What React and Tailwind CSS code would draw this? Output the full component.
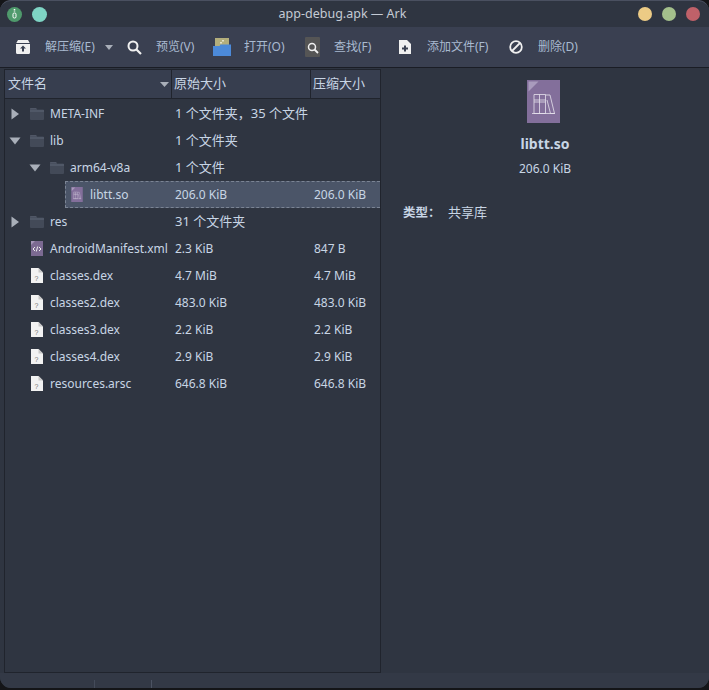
const font = { fontFamily: '"Noto Sans", "Noto Sans CJK SC", sans-serif' };

const FolderIcon = () => (
  <svg width="14" height="12" viewBox="0 0 14 12">
    <path d="M1 0h5l1 1.500h6a1 1 0 0 1 1 1V11a1 1 0 0 1-1 1H1a1 1 0 0 1-1-1V1a1 1 0 0 1 1-1z" fill="#434a58" />
    <path d="M0 2.500h14v1H0z" fill="#5f6676" />
    <path d="M1 0h5l1 1.500H0V1a1 1 0 0 1 1-1z" fill="#505766" />
  </svg>
);

const BlankFile = () => (
  <svg width="12" height="15" viewBox="0 0 12 15">
    <path d="M0 0h7.500L12 4.500V15H0z" fill="#f2f2f2" />
    <path d="M7.500 0L12 4.500H7.500z" fill="#c8c8c8" />
    <text x="5.500" y="12.500" fontSize="7" fill="#777777" fontFamily="Liberation Sans" textAnchor="middle">?</text>
  </svg>
);

const XmlFile = () => (
  <svg width="12" height="15" viewBox="0 0 12 15">
    <rect width="12" height="15" fill="#7c6a92" />
    <path d="M0 0h4L0 4z" fill="#a596b8" />
    <path d="M4 6L2 8l2 2M8 6l2 2-2 2M6.700 5.500l-1.400 5" fill="none" stroke="#eeeeee" strokeWidth="1" />
  </svg>
);

const LibraryFile = ({ small }) => (
  <svg width={small ? 12 : 33} height={small ? 15 : 43} viewBox="0 0 33 43">
    <rect width="33" height="43" fill="#836f9b" />
    <path d="M1.500 1.500h10l-10 10z" fill="#a99bbd" />
    <g fill="none" stroke="#e6e2ec" strokeWidth="0.800">
      <path d="M7 14.500h11.500v19H7zM12.500 14.500v19M7 20h11.500M7 22h11.500" />
      <path d="M18.500 15h4.500l4.500 18.500h-4L20 20" />
      <path d="M5 33.500h23" />
    </g>
  </svg>
);

const Arrow = ({ open }) => (
  <svg width="12" height="12" viewBox="0 0 12 12">
    {open ? <path d="M.5 2.500h11L6 9.500z" fill="#a9afb9" /> : <path d="M2.500 .5v11l7.500-5.500z" fill="#a9afb9" />}
  </svg>
);

const rows = [
  { depth: 0, arrow: "right", icon: "folder", name: "META-INF", size: "1 个文件夹，35 个文件", cjk: true },
  { depth: 0, arrow: "down", icon: "folder", name: "lib", size: "1 个文件夹", cjk: true },
  { depth: 1, arrow: "down", icon: "folder", name: "arm64-v8a", size: "1 个文件", cjk: true },
  { depth: 2, icon: "lib", name: "libtt.so", size: "206.0 KiB", packed: "206.0 KiB", selected: true },
  { depth: 0, arrow: "right", icon: "folder", name: "res", size: "31 个文件夹", cjk: true },
  { depth: 0, icon: "xml", name: "AndroidManifest.xml", size: "2.3 KiB", packed: "847 B" },
  { depth: 0, icon: "file", name: "classes.dex", size: "4.7 MiB", packed: "4.7 MiB" },
  { depth: 0, icon: "file", name: "classes2.dex", size: "483.0 KiB", packed: "483.0 KiB" },
  { depth: 0, icon: "file", name: "classes3.dex", size: "2.2 KiB", packed: "2.2 KiB" },
  { depth: 0, icon: "file", name: "classes4.dex", size: "2.9 KiB", packed: "2.9 KiB" },
  { depth: 0, icon: "file", name: "resources.arsc", size: "646.8 KiB", packed: "646.8 KiB" },
];

const rowIcon = (icon) => {
  if (icon === "folder") return <FolderIcon />;
  if (icon === "lib") return <LibraryFile small />;
  if (icon === "xml") return <XmlFile />;
  return <BlankFile />;
};

const indents = ["w-[20px]", "w-[40px]", "w-[60px]"];

const TreeRow = ({ row }) => (
  <div className="flex h-[27px] items-center">
    <div className={`${indents[row.depth]} flex h-full shrink-0 items-center justify-end pr-[4px]`}>
      {row.arrow && <Arrow open={row.arrow === "down"} />}
    </div>
    <div
      className={`flex h-full min-w-0 flex-1 items-center ${
        row.selected ? "border-y border-l border-dashed border-[#7b8494] bg-[#4b5568]" : ""
      }`}
    >
      <div className={`flex shrink-0 items-center justify-center pr-[2px] ${row.selected ? "w-[24px]" : "w-[25px]"}`}>
        {rowIcon(row.icon)}
      </div>
      <span className="min-w-0 flex-1 whitespace-nowrap">{row.name}</span>
      <span className={`w-[139px] shrink-0 whitespace-nowrap pl-[2px] ${row.cjk ? "text-[13px]" : ""}`}>{row.size}</span>
      <span className="w-[68px] shrink-0 whitespace-nowrap pl-[2px]">{row.packed}</span>
    </div>
  </div>
);

const ToolText = ({ className, children }) => <span className={`whitespace-nowrap ${className}`}>{children}</span>;

export default function App() {
  return (
    <div className="h-[690px] w-[709px] bg-[#141518] text-[12px] text-[#c8d5e5]" style={font}>
      <div className="flex h-[688px] flex-col overflow-hidden rounded-[11px] border-t border-[#4a5060] bg-[#2f3541]">
        {/* title bar */}
        <div className="flex h-[26px] shrink-0 items-center justify-between pl-[7px] pr-[9px]">
          <div className="flex items-center gap-[10px]">
            <div className="flex h-[15px] w-[15px] items-center justify-center rounded-full bg-[#4f9a6c]">
              <svg width="5" height="11" viewBox="0 0 5 11">
                <path d="M2.500 0v3" stroke="#ffffff" strokeWidth="1.500" strokeDasharray="1 .6" />
                <rect x="1" y="4" width="3" height="5" rx="1.200" fill="none" stroke="#ffffff" strokeWidth="1" />
              </svg>
            </div>
            <div className="h-[15px] w-[15px] rounded-full bg-[#7ed4c4]" />
          </div>
          <span className="text-[12.5px] text-[#c4cad4]">app-debug.apk — Ark</span>
          <div className="flex items-center gap-[10px]">
            <div className="h-[14px] w-[14px] rounded-full bg-[#eccb85]" />
            <div className="h-[14px] w-[14px] rounded-full bg-[#a3bf8b]" />
            <div className="h-[14px] w-[14px] rounded-full bg-[#bf6169]" />
          </div>
        </div>

        {/* toolbar */}
        <div className="flex h-[41px] shrink-0 items-center border-b border-[#1a1d25] bg-[#3a4051] pl-[16px] text-[12px] text-[#a9bad0]">
          <svg width="14" height="14" viewBox="0 0 14 14" className="shrink-0">
            <path d="M2 0h10l2 3.500V12.500a1.500 1.500 0 0 1-1.500 1.500h-11A1.500 1.500 0 0 1 0 12.500V3.500z" fill="#f0f0f0" />
            <path d="M0 3.500h14" stroke="#3a4051" strokeWidth="1" />
            <path d="M7 5.500l3 3H8v3H6v-3H4z" fill="#3a4051" />
          </svg>
          <ToolText className="ml-[15px] w-[60px]">解压缩(E)</ToolText>
          <svg width="8" height="5" viewBox="0 0 8 5" className="shrink-0">
            <path d="M0 0h8L4 5z" fill="#a9afb9" />
          </svg>
          <svg width="15" height="15" viewBox="0 0 15 15" className="ml-[14px] shrink-0">
            <circle cx="6" cy="6" r="4.500" fill="none" stroke="#f0f0f0" strokeWidth="2" />
            <path d="M9.500 9.500L14 14" stroke="#f0f0f0" strokeWidth="2.200" />
          </svg>
          <ToolText className="ml-[14px] w-[57px]">预览(V)</ToolText>
          <svg width="18" height="18" viewBox="0 0 18 18" className="shrink-0">
            <rect x="2" y="0" width="14" height="9" fill="#b3ae7c" />
            <path d="M9 2h2v1.500H9zM7 4h2v1.500H7z" fill="#e4e2c8" />
            <path d="M0 8h6.500l1-1.500H18V18H0z" fill="#4c8ad9" />
          </svg>
          <ToolText className="ml-[13px] w-[61px]">打开(O)</ToolText>
          <svg width="15" height="20" viewBox="0 0 15 20" className="shrink-0">
            <rect width="15" height="20" rx="1" fill="#555555" />
            <circle cx="7" cy="10" r="3.500" fill="none" stroke="#f0f0f0" strokeWidth="1.500" />
            <path d="M9.500 12.500L13 16" stroke="#f0f0f0" strokeWidth="1.800" />
          </svg>
          <ToolText className="ml-[14px] w-[65px]">查找(F)</ToolText>
          <svg width="12" height="14" viewBox="0 0 12 14" className="shrink-0">
            <path d="M0 0h8l4 4v10H0z" fill="#f0f0f0" />
            <path d="M5 5.500h2v2h2v2H7v2H5v-2H3v-2h2z" fill="#3a4051" />
          </svg>
          <ToolText className="ml-[16px] w-[82px]">添加文件(F)</ToolText>
          <svg width="14" height="14" viewBox="0 0 14 14" className="shrink-0">
            <circle cx="7" cy="7" r="5.800" fill="none" stroke="#f0f0f0" strokeWidth="1.800" />
            <path d="M3 11L11 3" stroke="#f0f0f0" strokeWidth="1.800" />
          </svg>
          <ToolText className="ml-[15px]">删除(D)</ToolText>
        </div>

        {/* content */}
        <div className="flex min-h-0 flex-1 pl-[4px] pt-px">
          <div className="flex w-[377px] shrink-0 flex-col border border-[#20242d]">
            <div className="flex h-[29px] shrink-0 items-center border-b border-[#20242d] bg-[#373e4f] text-[13px]">
              <div className="flex h-full w-[167px] shrink-0 items-center justify-between border-r border-[#20242d] pl-[3px] pr-[2px]">
                <span>文件名</span>
                <svg width="9" height="5" viewBox="0 0 9 5">
                  <path d="M0 0h9L4.500 5z" fill="#a9afb9" />
                </svg>
              </div>
              <div className="flex h-full w-[139px] shrink-0 items-center border-r border-[#20242d] pl-[2px]">原始大小</div>
              <div className="flex h-full min-w-0 flex-1 items-center overflow-hidden whitespace-nowrap pl-[2px]">压缩大小</div>
            </div>
            <div className="flex-1 pt-px">
              {rows.map((row) => (
                <TreeRow key={row.name} row={row} />
              ))}
            </div>
          </div>

          {/* details */}
          <div className="flex min-w-0 flex-1 flex-col">
            <div className="flex flex-col items-center pt-[11px]">
              <div className="mr-[3px]">
                <LibraryFile />
              </div>
              <span className="mt-[11px] text-[14px] font-bold leading-[20px]">libtt.so</span>
              <span className="mt-[5px] leading-[20px]">206.0 KiB</span>
            </div>
            <div className="mt-[24px] flex items-center pl-[22px] text-[13px] leading-[20px]">
              <span className="w-[45px] text-[12.5px] font-bold">类型：</span>
              <span className="-translate-y-px">共享库</span>
            </div>
          </div>
        </div>

        {/* status bar */}
        <div className="flex h-[15px] shrink-0 items-end bg-[#333946]">
          <div className="ml-[94px] h-[8px] w-px bg-[#444b5a]" />
          <div className="ml-[56px] h-[8px] w-px bg-[#4c5363]" />
        </div>
      </div>
    </div>
  );
}
